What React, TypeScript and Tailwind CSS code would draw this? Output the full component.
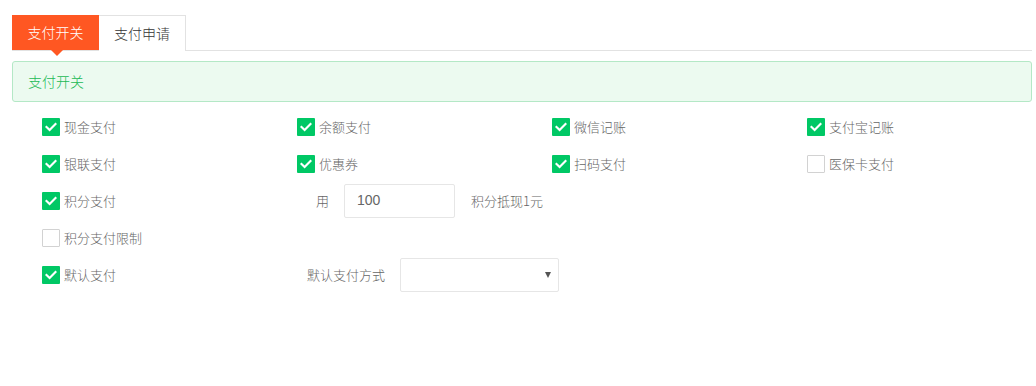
import React from "react";

const font = { fontFamily: '"Noto Sans CJK SC", "Noto Sans", sans-serif' };

function Check({ checked, label }: { checked: boolean; label: string }) {
  return (
    <div className="flex items-center h-[37px]">
      {checked ? (
        <span className="w-[18px] h-[18px] bg-[#00c865] flex items-center justify-center rounded-[1px]">
          <svg width="12" height="10" viewBox="0 0 12 10">
            <path d="M1.5 5 L4.6 8 L10.5 2" fill="none" stroke="#fff" strokeWidth="2.2" strokeLinecap="square" />
          </svg>
        </span>
      ) : (
        <span className="w-[18px] h-[18px] border border-[#d2d2d2] bg-white rounded-[1px]" />
      )}
      <span className="ml-[4px] text-[13px] text-[#666] leading-none">{label}</span>
    </div>
  );
}

export default function App() {
  return (
    <div className="w-[1036px] h-[386px] bg-white pt-[15px] pl-[12px] pr-[4px] font-light" style={font}>
      <div className="flex h-[36px] border-b border-[#e2e2e2]">
        <div className="relative w-[87px] h-[35px] bg-[#ff5722] text-white text-[14px] flex items-center justify-center">
          支付开关
          <span className="absolute left-[39px] top-[35px] w-0 h-0 border-l-[6px] border-r-[6px] border-t-[6px] border-l-transparent border-r-transparent border-t-[#ff5722]" />
        </div>
        <div className="w-[87px] h-[36px] border-t border-r border-[#e2e2e2] text-[#333] text-[14px] flex items-center justify-center -mb-px bg-white">
          支付申请
        </div>
      </div>
      <div className="mt-[10px] h-[41px] border border-[#b4e8c6] bg-[#ecfaf0] rounded-[3px] flex items-center pl-[15px] text-[14px] text-[#19b955]">
        支付开关
      </div>
      <div className="pl-[30px] pt-[6px]">
        <div className="grid grid-cols-[255px_255px_255px_255px]">
          <Check checked label="现金支付" />
          <Check checked label="余额支付" />
          <Check checked label="微信记账" />
          <Check checked label="支付宝记账" />
          <Check checked label="银联支付" />
          <Check checked label="优惠券" />
          <Check checked label="扫码支付" />
          <Check checked={false} label="医保卡支付" />
          <Check checked label="积分支付" />
          <div className="col-span-3 flex items-center h-[37px] pl-[19px] text-[13px] text-[#666]">
            <span className="leading-none">用</span>
            <div className="ml-[15px] w-[111px] h-[34px] border border-[#e6e6e6] rounded-[2px] flex items-center pl-[12px] text-[14px] text-[#666] font-normal" style={{ fontFamily: '"Liberation Sans", Arial, sans-serif' }}>
              100
            </div>
            <span className="ml-[16px] leading-none">积分抵现1元</span>
          </div>
          <Check checked={false} label="积分支付限制" />
          <div className="col-span-3" />
          <Check checked label="默认支付" />
          <div className="col-span-3 flex items-center h-[37px] pl-[10px] text-[13px] text-[#666]">
            <span className="leading-none">默认支付方式</span>
            <div className="relative ml-[15px] w-[159px] h-[34px] border border-[#e6e6e6] rounded-[2px] bg-white">
              <span className="absolute right-[7px] top-[13px] w-0 h-0 border-l-[3.5px] border-r-[3.5px] border-t-[6px] border-l-transparent border-r-transparent border-t-[#555]" />
            </div>
          </div>
        </div>
      </div>
    </div>
  );
}
